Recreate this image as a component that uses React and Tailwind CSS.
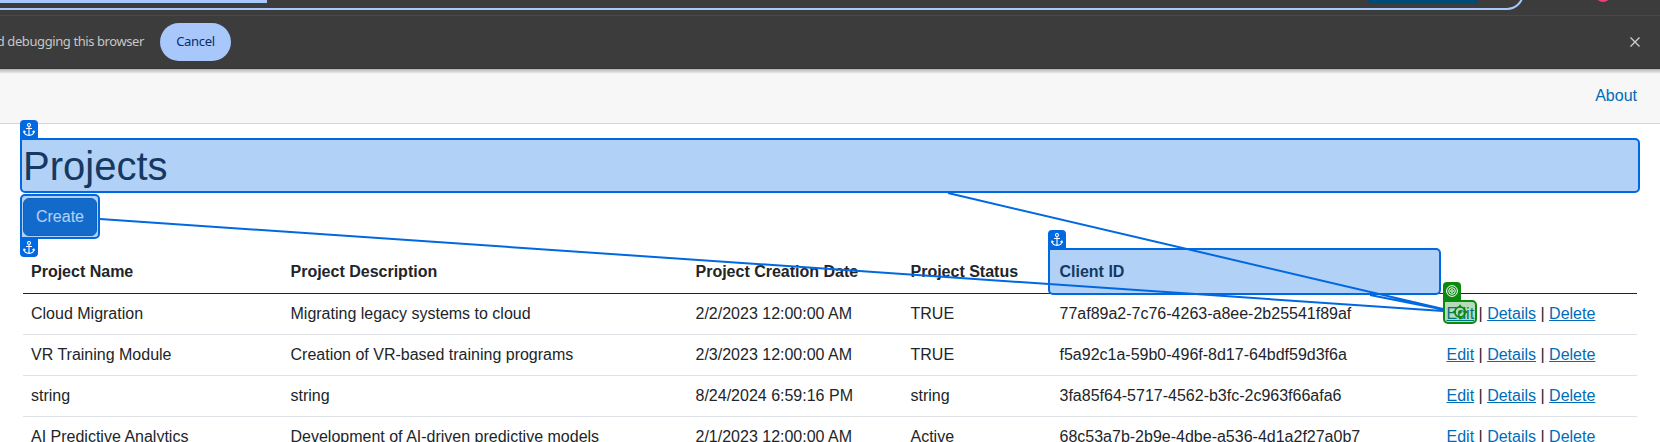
import React from "react";

const rows = [
  ["Cloud Migration", "Migrating legacy systems to cloud", "2/2/2023 12:00:00 AM", "TRUE", "77af89a2-7c76-4263-a8ee-2b25541f89af"],
  ["VR Training Module", "Creation of VR-based training programs", "2/3/2023 12:00:00 AM", "TRUE", "f5a92c1a-59b0-496f-8d17-64bdf59d3f6a"],
  ["string", "string", "8/24/2024 6:59:16 PM", "string", "3fa85f64-5717-4562-b3fc-2c963f66afa6"],
  ["AI Predictive Analytics", "Development of AI-driven predictive models", "2/1/2023 12:00:00 AM", "Active", "68c53a7b-2b9e-4dbe-a536-4d1a2f27a0b7"],
];

const headers = ["Project Name", "Project Description", "Project Creation Date", "Project Status", "Client ID"];

function Anchor() {
  return (
    <svg width="12" height="14" viewBox="0 0 12 14" fill="none" stroke="#ffffff" strokeWidth="1.1">
      <circle cx="6" cy="2" r="1.5" />
      <path d="M6 3.5V12.2M3 5.5H9M1 8.3C1.2 11 3 12.4 6 12.4S10.8 11 11 8.3M0.3 9.6L1.1 8L2.6 9M11.7 9.6L10.9 8L9.4 9" />
    </svg>
  );
}

function BrowserBar() {
  return (
    <div className="h-[69px] bg-[#3c3c3c] flex flex-col overflow-hidden">
      <div className="h-[15px] shrink-0 flex items-start">
        <div className="relative w-[1524px] h-[10px] flex items-start overflow-hidden">
          <div className="w-[267px] h-[3px] bg-[#a8c7fa]" />
          <div className="ml-[1101px] w-[110px] h-1 rounded-b-[8px] bg-[#004a77]" />
          <div className="absolute -left-10 bottom-0 w-[1564px] h-[34px] rounded-full border-2 border-[#a8c7fa]" />
        </div>
        <svg className="ml-[72px]" width="14" height="3" viewBox="0 0 14 3">
          <circle cx="7" cy="-6" r="8" fill="#ec407a" />
        </svg>
      </div>
      <div className="h-[54px] shrink-0 border-t border-[#484848] border-b border-b-[#343434] flex items-center text-[13px] font-['Noto_Sans',sans-serif]">
        <div className="w-[144px] flex justify-end">
          <span className="whitespace-nowrap text-[#c7c7c7] tracking-[-0.41px]">d debugging this browser</span>
        </div>
        <button className="ml-4 w-[71px] h-[38px] rounded-full bg-[#a8c7fa] text-[#062e6f] tracking-[-0.3px]">Cancel</button>
        <svg className="ml-auto mr-5" width="10" height="10" viewBox="0 0 10 10" stroke="#d0d0d0" strokeWidth="1.3">
          <path d="M0.5 0.5L9.5 9.5M9.5 0.5L0.5 9.5" />
        </svg>
      </div>
    </div>
  );
}

function ActionLinks() {
  return (
    <>
      <a className="underline text-[#006bb7]">Edit</a> | <a className="underline text-[#006bb7]">Details</a> |{" "}
      <a className="underline text-[#006bb7]">Delete</a>
    </>
  );
}

function Overlay() {
  return (
    <div className="absolute inset-0 pointer-events-none">
      <div className="absolute left-5 top-[138px] w-[1620px] h-[55px] rounded-[5px] rounded-tl-none border-2 border-[#0068e0] bg-[#0068e0]/30" />
      <div className="absolute left-5 top-[120px] w-[18px] h-[19px] rounded-t bg-[#0068e0] flex justify-center pt-[3px]"><Anchor /></div>
      <div className="absolute left-5 top-[194px] w-20 h-[45px] rounded-[5px] rounded-bl-none border-2 border-[#0068e0] bg-[#0068e0]/30" />
      <div className="absolute left-5 top-[238px] w-[18px] h-[19px] rounded-b bg-[#0068e0] flex justify-center pt-[3px]"><Anchor /></div>
      <div className="absolute left-[1048px] top-[248px] w-[393px] h-[47px] rounded-[5px] rounded-tl-none border-2 border-[#0068e0] bg-[#0068e0]/30" />
      <div className="absolute left-[1048px] top-[230px] w-[18px] h-[19px] rounded-t bg-[#0068e0] flex justify-center pt-[3px]"><Anchor /></div>
      <svg className="absolute inset-0" width="1660" height="442" viewBox="0 0 1660 442" stroke="#0068e0" strokeWidth="2">
        <path d="M948 193L1443 309M100 219L1443 311M1370 295L1443 309.5" />
      </svg>
      <div className="absolute left-[1443px] top-[300px] w-[34px] h-6 rounded-[5px] rounded-tl-none border-2 border-[#0b8a0f] bg-[#0b8a0f]/30 flex items-center justify-center">
        <svg width="16" height="16" viewBox="0 0 16 16" fill="none" stroke="#0b8a0f" strokeWidth="1.8">
          <circle cx="8" cy="8" r="5.2" />
          <path d="M8 0.8V3.6M8 12.4V15.2M0.8 8H3.6M12.4 8H15.2" />
          <circle cx="8" cy="8" r="1.8" fill="#0b8a0f" stroke="none" />
        </svg>
      </div>
      <div className="absolute left-[1443px] top-[282px] w-[18px] h-[19px] rounded-t bg-[#0b8a0f] flex justify-center pt-[3px]">
        <svg width="12" height="12" viewBox="0 0 12 12" fill="none" stroke="#ffffff" strokeWidth="1">
          <circle cx="6" cy="6" r="5.4" />
          <circle cx="6" cy="6" r="3.3" />
          <circle cx="6" cy="6" r="1.3" />
        </svg>
      </div>
    </div>
  );
}

export default function App() {
  return (
    <div className="relative w-[1660px] h-[442px] overflow-hidden bg-white text-base text-[#212529] font-['Liberation_Sans',Arial,sans-serif]">
      <BrowserBar />
      <header className="h-[55px] bg-[#f7f7f7] bg-linear-to-b from-[#b4b4b4] to-[#f7f7f7] to-[5px] border-b border-[#d6d5d5] flex items-center justify-end pr-[23px]">
        <a className="text-[#006bb7]">About</a>
      </header>
      <main className="px-[23px] pt-[18px]">
        <h1 className="h-12 text-[40px] leading-[48px]">Projects</h1>
        <button className="mt-[7.5px] block w-[74px] h-[38px] rounded-md bg-[#1b6ec2] border border-[#1861ac] text-white">Create</button>
        <table className="mt-[16.5px] w-[1614px] table-fixed border-collapse">
          <colgroup>
            <col className="w-[259.5px]" />
            <col className="w-[405px]" />
            <col className="w-[215px]" />
            <col className="w-[149px]" />
            <col className="w-[387px]" />
            <col />
          </colgroup>
          <thead>
            <tr className="h-[41px] border-b border-[#212529] text-left">
              {headers.map((h) => (
                <th key={h} className="p-2 leading-6 font-bold whitespace-nowrap">{h}</th>
              ))}
              <th />
            </tr>
          </thead>
          <tbody>
            {rows.map((row) => (
              <tr key={row[0]} className="h-[41px] border-b border-[#dee2e6]">
                {row.map((cell, i) => (
                  <td key={i} className="p-2 leading-6 whitespace-nowrap">{cell}</td>
                ))}
                <td className="p-2 leading-6 whitespace-nowrap"><ActionLinks /></td>
              </tr>
            ))}
          </tbody>
        </table>
      </main>
      <Overlay />
    </div>
  );
}
